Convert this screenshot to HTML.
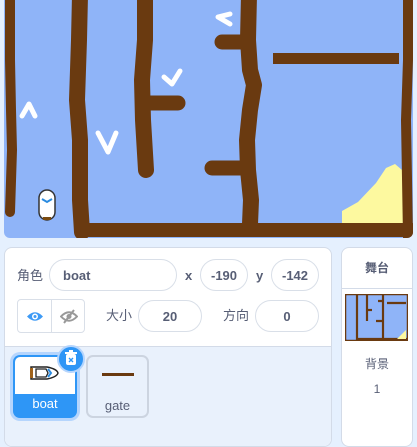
<!DOCTYPE html>
<html><head><meta charset="utf-8"><style>
*{margin:0;padding:0;box-sizing:border-box}
body{width:417px;height:428px;background:#e5f0fe;font-family:"Liberation Sans","Noto Sans CJK SC",sans-serif;position:relative;overflow:hidden;color:#575e75}
.abs{position:absolute}
.panel{background:#fff;border:1px solid #d3dbe8;border-radius:8px}
.inp{position:absolute;border:1px solid #d9dfe8;border-radius:16px;background:#fff;font-weight:bold;font-size:13px;color:#575e75;display:flex;align-items:center}
.lbl{position:absolute;font-size:13px;color:#575e75;line-height:16px}
</style></head><body>
<svg class="abs" style="left:4px;top:0" width="410" height="239" viewBox="4 0 410 239">
<defs><clipPath id="c"><rect x="4" y="-10" width="409" height="248" rx="6"/></clipPath></defs>
<g clip-path="url(#c)">
<rect x="4" y="0" width="410" height="239" fill="#8fb4f8"/>
<polygon points="342,224 342,211 358,202 376,183 386,168 395,164 402,170 405,224" fill="#fdf99f"/>
<g stroke="#6a3a10" stroke-linecap="round" fill="none" stroke-linejoin="round">
<path d="M10 -5 L10 60 L11 110 L12 150 L10 212" stroke-width="10"/>
<path d="M80 -5 L79 40 L77 100 L80 140 L80 200 L82 232" stroke-width="16"/>
<path d="M84 230 L412 230" stroke-width="14"/>
<path d="M145 -5 L145 40 L142 80 L143 120 L146 170" stroke-width="16"/>
<path d="M150 103 L178 103" stroke-width="15"/>
<path d="M249 -5 L248 40 L250 70 L254 85 L250 110 L247 140 L248 170 L251 200 L250 224" stroke-width="16"/>
<path d="M222 42 L246 42" stroke-width="15"/>
<path d="M212 168 L246 168" stroke-width="15"/>
<path d="M408 -5 L408 60 L406 120 L408 237" stroke-width="10"/>
</g>
<rect x="273" y="53" width="126" height="11" fill="#6a3a10"/>
<g stroke="#fff" stroke-width="5" stroke-linecap="round" fill="none" stroke-linejoin="round">
<path d="M22 116 L29 104 L35 116"/>
<path d="M98 133 L108 152 L116 133"/>
<path d="M164 77 L172 84 L180 71"/>
<path d="M230 14 L218 17 L230 24"/>
</g>
<g transform="translate(47,205)">
<rect x="-8" y="-15" width="16" height="30" rx="8" fill="#fff" stroke="#333" stroke-width="1.5"/>
<path d="M-5 -6 L0 -3 L5 -6" stroke="#2a8be0" stroke-width="2" fill="none"/>
<rect x="-4" y="12" width="8" height="3" fill="#7a4a10"/>
</g>
</g>
</svg>
<div class="abs panel" style="left:4px;top:247px;width:328px;height:200px;overflow:hidden">
<div class="abs" style="left:0;top:98px;width:328px;height:110px;background:#e9f1fc;border-top:1px solid #d3dbe8"></div>
</div>
<div class="lbl" style="left:17px;top:268px">角色</div>
<div class="inp" style="left:49px;top:259px;width:128px;height:32px;padding-left:13px">boat</div>
<div class="lbl" style="left:185px;top:268px;font-weight:bold">x</div>
<div class="inp" style="left:200px;top:259px;width:48px;height:32px;justify-content:center">-190</div>
<div class="lbl" style="left:256px;top:268px;font-weight:bold">y</div>
<div class="inp" style="left:271px;top:259px;width:48px;height:32px;justify-content:center">-142</div>
<div class="abs" style="left:17px;top:299px;width:68px;height:34px;border:1px solid #d9dfe8;border-radius:4px;background:#fff">
<div class="abs" style="left:0;top:0;width:34px;height:32px;border-right:1px solid #d9dfe8"></div>
<svg class="abs" style="left:8px;top:10px" width="18" height="13" viewBox="0 0 18 13"><path d="M1 6.5 Q9 -2 17 6.5 Q9 15 1 6.5Z" fill="#3d9af5"/><circle cx="9" cy="6.5" r="3" fill="#fff"/><circle cx="9" cy="6.5" r="1.5" fill="#3d9af5"/></svg>
<svg class="abs" style="left:42px;top:9px" width="18" height="15" viewBox="0 0 18 15"><path d="M1 7.5 Q9 -1 17 7.5 Q9 16 1 7.5Z" fill="none" stroke="#999" stroke-width="2"/><circle cx="9" cy="7.5" r="2.5" fill="#999"/><path d="M14 1 L4 14" stroke="#999" stroke-width="2"/></svg>
</div>
<div class="lbl" style="left:106px;top:308px">大小</div>
<div class="inp" style="left:138px;top:300px;width:64px;height:32px;justify-content:center">20</div>
<div class="lbl" style="left:223px;top:308px">方向</div>
<div class="inp" style="left:255px;top:300px;width:64px;height:32px;justify-content:center">0</div>
<div class="abs" style="left:10px;top:352px;width:70px;height:69px;border-radius:10px;background:#b5d5fd"></div>
<div class="abs" style="left:13px;top:355px;width:64px;height:63px;border-radius:7px;background:#2e96f6;overflow:hidden">
<div class="abs" style="left:2px;top:2px;width:60px;height:37px;background:#fff;border-radius:5px 5px 0 0"></div>
<svg class="abs" style="left:16px;top:10px" width="30" height="16" viewBox="0 0 30 16"><path d="M2 2 L18 2 Q28 4 29 8 Q28 12 18 14 L2 14Z" fill="#fff" stroke="#222" stroke-width="1.5"/><rect x="1" y="3" width="3" height="10" fill="#a0621a"/><path d="M7 4 L17 4 L19 8 L17 12 L7 12Z" fill="none" stroke="#222" stroke-width="1.3"/><path d="M19 4 L22 8 L19 12" stroke="#2a8be0" stroke-width="2" fill="none"/></svg>
<div class="abs" style="left:0;top:41px;width:64px;text-align:center;color:#fff;font-size:13px">boat</div>
</div>
<div class="abs" style="left:57px;top:345px;width:28px;height:28px;border-radius:50%;background:#2e96f6;border:2px solid #b5d5fd"></div>
<svg class="abs" style="left:64px;top:350px" width="14" height="16" viewBox="0 0 14 16"><rect x="2" y="4" width="10" height="11" rx="2" fill="#fff"/><rect x="1" y="2" width="12" height="2" fill="#fff"/><rect x="5" y="0" width="4" height="2" fill="#fff"/><path d="M5 8 L9 12 M9 8 L5 12" stroke="#2e96f6" stroke-width="1.4"/></svg>
<div class="abs" style="left:86px;top:355px;width:63px;height:63px;border-radius:7px;border:2px solid #ccd4e0;background:#e9f1fc">
<div class="abs" style="left:14px;top:16px;width:32px;height:3px;background:#6a3a10"></div>
<div class="abs" style="left:0;top:41px;width:59px;text-align:center;font-size:13px">gate</div>
</div>
<div class="abs panel" style="left:341px;top:247px;width:72px;height:200px">
<div class="abs" style="left:0;top:0;width:70px;height:41px;border-bottom:1px solid #d3dbe8;text-align:center;line-height:41px;font-size:12px;font-weight:bold">舞台</div>
<svg class="abs" style="left:3px;top:46px" width="63" height="47" viewBox="0 0 63 47"><rect x="0.5" y="0.5" width="62" height="46" rx="2" fill="#8fb4f8" stroke="#855cd6" stroke-width="1"/><rect x="0.5" y="0.5" width="62" height="46" fill="none" stroke="#6a3a10" stroke-width="1.5"/><g stroke="#6a3a10" stroke-width="2.2" fill="none"><path d="M12 0 L12 45 L62 45"/><path d="M22 0 L22 27"/><path d="M22 16 L27 16"/><path d="M38 0 L38 44"/><path d="M33 7 L38 7 M31 27 L38 27"/><path d="M42 9 L61 9"/></g><path d="M52 45 L61 36 L61 45Z" fill="#fdf99f"/></svg>
<div class="abs" style="left:0;top:107px;width:70px;text-align:center;font-size:12px">背景</div>
<div class="abs" style="left:0;top:134px;width:70px;text-align:center;font-size:12px">1</div>
</div>
</body></html>
